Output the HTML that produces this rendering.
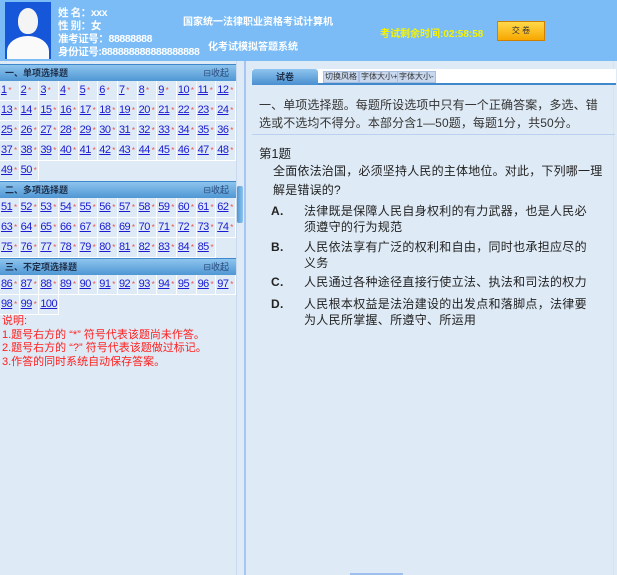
<!DOCTYPE html>
<html><head><meta charset="utf-8"><style>
*{margin:0;padding:0;box-sizing:border-box}
body{width:617px;height:575px;overflow:hidden;background:#deeaf5;font-family:"Liberation Sans","Noto Sans CJK SC",sans-serif;position:relative}
#hd{position:absolute;left:0;top:0;width:617px;height:61px;background:#7bbcf6}
#photo{position:absolute;left:5px;top:2px;width:46px;height:57px;background:#1656d8;overflow:hidden}
#photo .face{position:absolute;left:13px;top:6px;width:20px;height:26px;background:#f4f4f4;border-radius:50% 50% 45% 45%}
#photo .body{position:absolute;left:2px;top:34px;width:42px;height:30px;background:#fafafa;border-radius:50% 50% 0 0}
.info{position:absolute;left:58px;color:#fff;font-size:10.5px;font-weight:bold;line-height:13px;letter-spacing:-0.4px;white-space:nowrap}
.title{position:absolute;color:#fff;font-size:10px;font-weight:bold}
#timer{position:absolute;left:380px;top:25px;color:#f6f400;font-size:10px;font-weight:bold}
#btn{position:absolute;left:497px;top:21px;width:48px;height:20px;background:linear-gradient(#ffd84a,#f7a700);border:1px solid #d08000;font-size:8px;text-align:center;line-height:18px;color:#333}
#left{position:absolute;left:0;top:61px;width:236px;height:514px;background:#deeaf5}
.sh{height:17px;background:linear-gradient(#8ec4ee,#4f97d4);border-top:1px solid #3f88cc;font-size:9px;font-weight:bold;color:#1e2f4a;line-height:16px;padding-left:5px;position:relative}
.sh span{position:absolute;right:7px;top:0;font-weight:normal;color:#2a4a7a;font-size:9px}
.grid{display:flex;flex-wrap:wrap;width:236px}
.grid div{width:19.66px;height:20px;border-right:1px solid #fff;border-bottom:1px solid #fff;font-size:11px;line-height:18px;color:#1a1ad0;padding-left:1px;white-space:nowrap;overflow:hidden;letter-spacing:-0.5px}
.grid div u{text-decoration:underline}
.grid div i{color:#f05050;font-style:normal;font-size:8px}
#notes{position:absolute;left:2px;top:254px;color:#ff2020;font-size:11px;line-height:13.5px;white-space:nowrap}
#div{position:absolute;left:236px;top:61px;width:9px;height:514px;background:#deeaf5;border-left:1px solid #c9d9ee;border-right:1px solid #a8c4f0}
#tab{position:absolute;left:237px;top:186px;width:6px;height:37px;background:linear-gradient(90deg,#4f97d4,#8ec4ee);border-radius:2px}
#right{position:absolute;left:245px;top:61px;width:369px;height:514px;background:#deeaf5;border-left:1px solid #a8c4f0;border-right:1px solid #f0d8e8}
#tabs{position:absolute;left:6px;top:8px;width:364px;height:16px;background:#fff;border-bottom:2px solid #3f88cc}
#t1{position:absolute;left:0;top:0;width:66px;height:16px;background:linear-gradient(#8ec4ee,#4a8fd0);border-radius:3px 3px 0 0;font-size:9px;font-weight:bold;text-align:center;line-height:16px;color:#1e2f4a}
.tb{position:absolute;top:2px;height:12px;background:#c7d7ee;border:1px solid #a9bde0;font-size:8px;line-height:10px;color:#333;padding:0 1px}
#desc{position:absolute;left:13px;top:35px;width:342px;font-size:12px;line-height:18px;color:#333;letter-spacing:0.1px}
#hr{position:absolute;left:6px;top:73px;width:363px;border-top:1px solid #b9d1ee}
#q{position:absolute;left:13px;top:82px;font-size:12.5px;color:#222}
#stem{position:absolute;left:27px;top:101px;width:338px;font-size:12px;line-height:19px;color:#222;letter-spacing:0.2px}
.opt{position:absolute;left:25px;font-size:12px;line-height:16px;color:#222;width:330px;letter-spacing:0.3px}
.opt b{position:absolute;left:0;top:0;font-weight:bold}
.opt span{display:block;margin-left:33px;width:292px}
#bar{position:absolute;left:350px;top:573px;width:53px;height:2px;background:#a0bdf0}
</style></head><body>
<div id="hd">
<div id="photo"><div class="face"></div><div class="body"></div></div>
<div class="info" style="top:7px">姓 名：xxx</div>
<div class="info" style="top:20px">性 别：女</div>
<div class="info" style="top:33px">准考证号：88888888</div>
<div class="info" style="top:46px">身份证号:888888888888888888</div>
<div class="title" style="left:183px;top:13px">国家统一法律职业资格考试计算机</div>
<div class="title" style="left:208px;top:38px">化考试模拟答题系统</div>
<div id="timer">考试剩余时间:02:58:58</div>
<div id="btn">交 卷</div>
</div>
<div id="left">
<div class="sh" style="margin-top:3px">一、单项选择题<span>⊟收起</span></div>
<div class="grid" id="g1"></div>
<div class="sh">二、多项选择题<span>⊟收起</span></div>
<div class="grid" id="g2"></div>
<div class="sh">三、不定项选择题<span>⊟收起</span></div>
<div class="grid" id="g3"></div>
<div id="notes">说明:<br>1.题号右方的 “*” 符号代表该题尚未作答。<br>2.题号右方的 “?” 符号代表该题做过标记。<br>3.作答的同时系统自动保存答案。</div>
</div>
<div id="div"></div><div id="tab"></div>
<div id="right">
<div id="tabs"><div id="t1">试卷</div>
<div class="tb" style="left:71px">切换风格</div><div class="tb" style="left:107px">字体大小+</div><div class="tb" style="left:145px">字体大小-</div></div>
<div id="desc">一、单项选择题。每题所设选项中只有一个正确答案，多选、错选或不选均不得分。本部分含1—50题，每题1分，共50分。</div>
<div id="hr"></div>
<div id="q">第1题</div>
<div id="stem">全面依法治国，必须坚持人民的主体地位。对此，下列哪一理解是错误的?</div>
<div class="opt" style="top:142px"><b>A.</b><span>法律既是保障人民自身权利的有力武器，也是人民必须遵守的行为规范</span></div>
<div class="opt" style="top:178px"><b>B.</b><span>人民依法享有广泛的权利和自由，同时也承担应尽的义务</span></div>
<div class="opt" style="top:213px"><b>C.</b><span>人民通过各种途径直接行使立法、执法和司法的权力</span></div>
<div class="opt" style="top:235px"><b>D.</b><span>人民根本权益是法治建设的出发点和落脚点，法律要为人民所掌握、所遵守、所运用</span></div>
</div>
<div id="bar"></div>
<script>
function f(id,a,b){var h='';for(var i=a;i<=b;i++)h+='<div><u>'+i+'</u><i> *</i></div>';document.getElementById(id).innerHTML=h;}
f('g1',1,50);f('g2',51,85);f('g3',86,100);
</script>
</body></html>
